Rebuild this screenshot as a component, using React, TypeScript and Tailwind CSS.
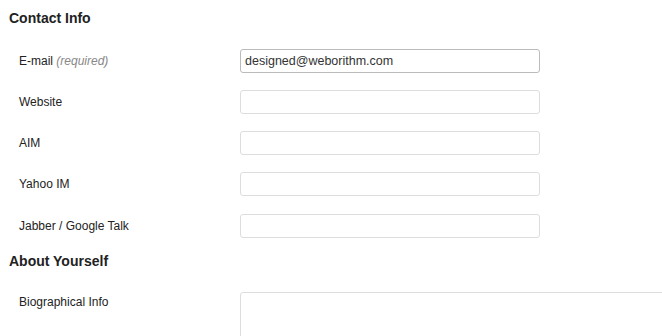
import React from 'react'

const FIELDS = [
  { label: 'E-mail', required: true, value: 'designed@weborithm.com', focused: true },
  { label: 'Website', value: '' },
  { label: 'AIM', value: '' },
  { label: 'Yahoo IM', value: '' },
  { label: 'Jabber / Google Talk', value: '' },
]

export default function App() {
  return (
    <div className="w-[662px] h-[336px] overflow-hidden bg-white text-[#222] font-['Liberation_Sans',Arial,sans-serif]">
      <h3 className="pl-[9px] pt-[8px] text-[14px] leading-[20px] font-bold">Contact Info</h3>

      <div className="mt-[12px]">
        {FIELDS.map((f) => (
          <div key={f.label} className="flex items-center h-[41.25px]">
            <label className="w-[240px] shrink-0 pl-[19px] text-[12px] leading-[16px] text-[#222]">
              {f.label}
              {f.required && <span className="italic text-[#888]"> (required)</span>}
            </label>
            <input
              type="text"
              defaultValue={f.value}
              className={`w-[300px] h-[24px] rounded-[3px] border bg-white px-[4px] text-[12.5px] text-[#333] outline-none ${
                f.focused ? 'border-[#bbb]' : 'border-[#ddd]'
              }`}
            />
          </div>
        ))}
      </div>

      <h3 className="mt-[5px] pl-[9px] text-[14px] leading-[20px] font-bold">About Yourself</h3>

      <div className="mt-[21px] flex items-start">
        <label className="w-[240px] shrink-0 pl-[19px] pt-[2px] text-[12px] leading-[16px] text-[#222]">Biographical Info</label>
        <textarea className="w-[500px] h-[100px] shrink-0 rounded-[3px] border border-[#ddd] bg-white resize-none outline-none" />
      </div>
    </div>
  )
}
